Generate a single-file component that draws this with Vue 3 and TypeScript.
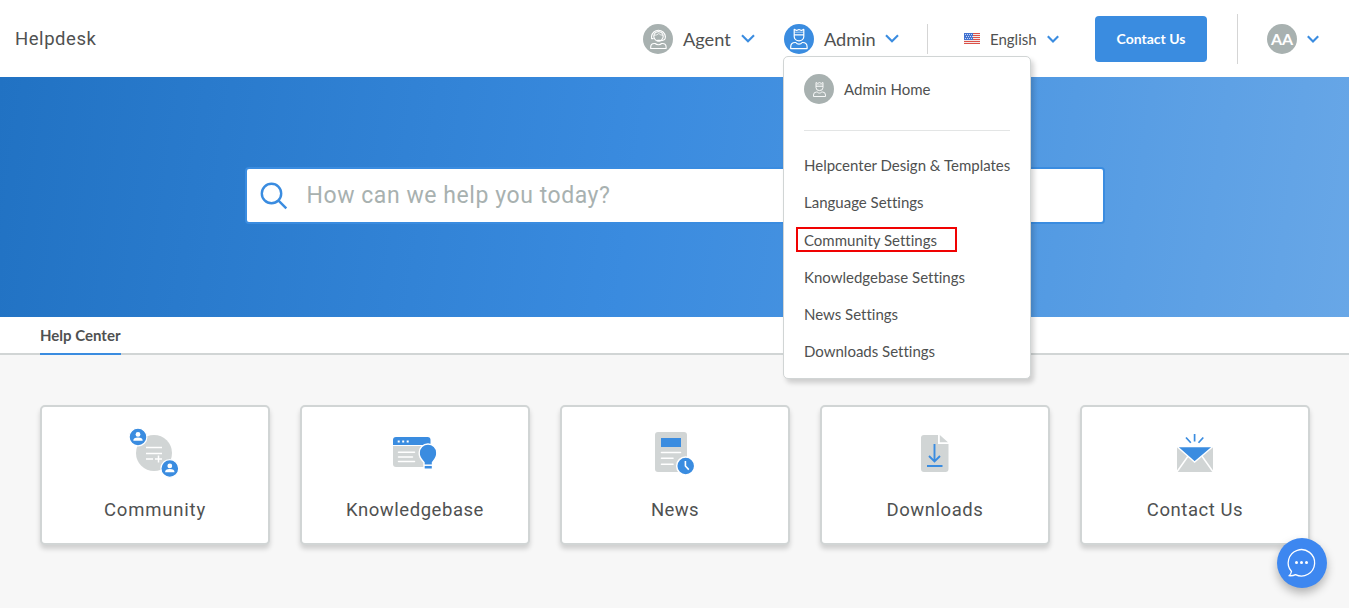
<script setup lang="ts">
interface Card {
  id: string
  label: string
}

const settings: string[] = [
  'Helpcenter Design & Templates',
  'Language Settings',
  'Community Settings',
  'Knowledgebase Settings',
  'News Settings',
  'Downloads Settings',
]
const highlighted = 'Community Settings'

const cards: Card[] = [
  { id: 'community', label: 'Community' },
  { id: 'kb', label: 'Knowledgebase' },
  { id: 'news', label: 'News' },
  { id: 'downloads', label: 'Downloads' },
  { id: 'mail', label: 'Contact Us' },
]
</script>

<template>
  <div class="page">
    <header class="topbar">
      <div class="brand">Helpdesk</div>
      <nav class="nav">
        <div class="role agent">
          <svg class="avatar" viewBox="0 0 30 30">
            <circle cx="15" cy="15" r="15" fill="#a8b1b0" />
            <g fill="none" stroke="#fff" stroke-width="1.1" stroke-linecap="round" stroke-linejoin="round">
              <path d="M8.600 12.300a6.900 6.900 0 0 1 13.700 0" />
              <path d="M8.600 12.200v2.400h1.600M22.300 12.200v1.600q0 2.900-5.400 2.900" />
              <circle cx="15.500" cy="12.300" r="4.700" />
              <path d="M11.200 11.300q3.200 0 4.600-1.800q1.400 1.700 4 1.800" stroke-width=".8" />
              <path d="M14.700 16.600h2" stroke-width="1.800" />
              <path d="M7.700 24.500V23q0-3.500 3.600-3.500h.8q1.300 1.200 3.300 1.200t3.300-1.200h.8q3.600 0 3.600 3.500v1.500Z" />
            </g>
          </svg>
          <span class="role-name">Agent</span>
          <svg class="chevron" viewBox="0 0 14 9"><path d="M1 1.300 7 7.300l6-6" /></svg>
        </div>

        <div class="role admin">
          <svg class="avatar" viewBox="0 0 30 30">
            <circle cx="15" cy="15" r="15" fill="#3a8ce0" />
            <g fill="none" stroke="#fff" stroke-width="1.200" stroke-linejoin="round">
              <path d="M10.200 11V5.400l2.400 1.100L15 5.500l2.400 1 2.400-1.100V11M10.200 10.800h9.600v1.800a4.800 4.300 0 0 1-9.600 0Z" />
              <path d="M10.200 8.200h9.600" stroke-width=".6" />
              <path d="M6.700 24.600V23q0-4.500 4.500-4.500h.6q1.200 1.600 3.200 1.600t3.200-1.600h.4q4.500 0 4.500 4.500v1.600Z" />
            </g>
          </svg>
          <span class="role-name">Admin</span>
          <svg class="chevron" viewBox="0 0 14 9"><path d="M1 1.300 7 7.300l6-6" /></svg>

          <div class="menu">
            <div class="menu-home">
              <svg class="avatar" viewBox="0 0 30 30">
                <circle cx="15" cy="15" r="15" fill="#a8b1b0" />
                <g fill="none" stroke="#fff" stroke-width=".9" stroke-linejoin="round">
                  <path d="M12 12.500V8.500l1.700.9 1.800-.8 1.800.8 1.700-.9v4M12 12.300h7v1.300a3.500 3 0 0 1-7 0Z" />
                  <path d="M12 10.800h7" stroke-width=".5" />
                  <path d="M9.500 22.500V21q0-3 3-3h.7q1 1.100 2.300 1.100t2.300-1.100h.7q3 0 3 3v1.500Z" />
                </g>
              </svg>
              <span>Admin Home</span>
            </div>
            <ul class="menu-list">
              <li v-for="item in settings" :key="item" :class="{ marked: item === highlighted }">
                <span>{{ item }}</span>
              </li>
            </ul>
          </div>
        </div>

        <span class="divider short"></span>

        <div class="language">
          <svg class="flag" viewBox="0 0 16 11" shape-rendering="crispEdges">
            <rect width="16" height="11" fill="#f3e9e9" />
            <path d="M0 .5h16M0 2.500h16M0 4.500h16M0 6.500h16M0 8.500h16M0 10.500h16" stroke="#dc5148" />
            <rect width="9" height="7" fill="#4373d0" />
            <path d="M1 1.500h8M2 3.500h7M1 5.500h8" stroke="#c5d7f7" stroke-dasharray="1 1" />
          </svg>
          <span class="language-name">English</span>
          <svg class="chevron small" viewBox="0 0 12 8"><path d="M.8 1.200 6 6.400l5.200-5.200" /></svg>
        </div>

        <button class="contact-button" type="button">Contact Us</button>
        <span class="divider tall"></span>

        <div class="user">
          <span class="initials">AA</span>
          <svg class="chevron small" viewBox="0 0 12 8"><path d="M.8 1.200 6 6.400l5.200-5.200" /></svg>
        </div>
      </nav>
    </header>

    <section class="hero">
      <div class="search">
        <svg class="search-icon" viewBox="0 0 28 28">
          <circle cx="11.500" cy="11.500" r="9.700" />
          <path d="m18.300 18.300 8 8" />
        </svg>
        <span>How can we help you today?</span>
      </div>
    </section>

    <div class="tabs"><span class="tab">Help Center</span></div>

    <main class="cards">
      <div v-for="card in cards" :key="card.id" class="card">
        <svg v-if="card.id === 'community'" class="card-icon" viewBox="0 0 70 65">
          <circle cx="34" cy="33" r="18" fill="#d1d5d5" />
          <path d="M26 27.500h16M26 33.400h16M26 39h7M38.500 35.500v7M35 39h7" stroke="#fff" stroke-width="1.500" />
          <g v-for="p in [[18, 17], [49.800, 48.500]]" :key="p[0]" :transform="`translate(${p[0]} ${p[1]})`">
            <circle r="8.900" fill="#3a8ce0" stroke="#fff" stroke-width="1.200" />
            <circle cy="-2.600" r="2.400" fill="#fff" />
            <path d="M-4.700 3.700q0-3.300 4.700-3.300t4.700 3.300Z" fill="#fff" />
          </g>
        </svg>
        <svg v-else-if="card.id === 'kb'" class="card-icon" viewBox="0 0 70 65">
          <path d="M13 26h37.500v18a3 3 0 0 1-3 3H16a3 3 0 0 1-3-3Z" fill="#d1d5d5" />
          <path d="M16 17h31.500a3 3 0 0 1 3 3v5H13v-5a3 3 0 0 1 3-3Z" fill="#3a8ce0" />
          <path d="M18.500 32.200h16M18.500 37h14M18.500 41.600h16" stroke="#fff" stroke-width="1.500" stroke-linecap="round" />
          <path d="M17.700 21.500h2M22.200 21.500h2M26.700 21.500h2" stroke="#fff" stroke-width="1.800" />
          <path d="M44 49.200v-6.700q-5.200-5.300-4.800-9.700a8.800 8.800 0 0 1 17.600 0q.4 4.400-4.300 9.700v6.700Z" fill="#3a8ce0" stroke="#fff" stroke-width="1.400" />
          <path d="M44 45.200h8.500" stroke="#fff" stroke-width="1.500" />
        </svg>
        <svg v-else-if="card.id === 'news'" class="card-icon" viewBox="0 0 70 65">
          <rect x="15" y="12" width="32" height="40" rx="3" fill="#d1d5d5" />
          <path d="M21 18h20v9H21Z" fill="#3a8ce0" />
          <path d="M21.500 32.500h19M21.500 38.300h11.500M21.500 44.300h11.500" stroke="#fff" stroke-width="1.600" stroke-linecap="round" />
          <circle cx="45.700" cy="46" r="9" fill="#3a8ce0" stroke="#fff" stroke-width="1.500" />
          <path d="M45.400 41v5l3.400 3.600" fill="none" stroke="#fff" stroke-width="1.600" />
        </svg>
        <svg v-else-if="card.id === 'downloads'" class="card-icon" viewBox="0 0 70 65">
          <path d="M24 15h14v9h10.500v25a3 3 0 0 1-3 3H24a3 3 0 0 1-3-3V18a3 3 0 0 1 3-3Z" fill="#d1d5d5" />
          <path d="M39.800 15v7.200H48Z" fill="#d1d5d5" />
          <path d="M34.500 24v17.500M29 36l5.500 5.500L40 36M27 46h15.500" fill="none" stroke="#3a8ce0" stroke-width="1.900" />
        </svg>
        <svg v-else class="card-icon" viewBox="0 0 70 65">
          <rect x="17" y="27" width="36" height="25" fill="#d1d5d5" />
          <path d="m17 51.800 11.500-16.300M53 51.800 41.500 35.500" stroke="#fff" stroke-width="1.500" />
          <path d="M17 26.500h36L34.600 42Z" fill="#3a8ce0" stroke="#fff" stroke-width="1.400" />
          <path d="M34.600 14v7.500M26 17.500l4.800 5.300M43.300 17.500l-4.800 5.300" stroke="#3a8ce0" stroke-width="1.700" />
        </svg>
        <span class="card-label" :class="card.id">{{ card.label }}</span>
      </div>
    </main>

    <div class="chat">
      <svg viewBox="0 0 50 50">
        <path d="M14.500 33.500A13.200 13.200 0 1 1 18.500 36.600Q16 38 12 37.700q2-1.500 2.500-4.200Z" fill="none" stroke="#fff" stroke-width="1.300" stroke-linejoin="round" />
        <g fill="#fff"><circle cx="19.500" cy="24.500" r="1.500" /><circle cx="24.500" cy="24.500" r="1.500" /><circle cx="29.500" cy="24.500" r="1.500" /></g>
      </svg>
    </div>
  </div>
</template>

<style>
body {
  margin: 0;
  background: #f7f7f7;
}
</style>

<style scoped>
* {
  box-sizing: border-box;
}
.page {
  position: relative;
  width: 1349px;
  height: 608px;
  overflow: hidden;
  background: #f7f7f7;
  color: #4f5151;
  font-family: Lato, 'Liberation Sans', sans-serif;
  font-variant-ligatures: none;
}
svg {
  display: block;
  flex: none;
}
.topbar {
  display: flex;
  align-items: center;
  justify-content: space-between;
  height: 77px;
  padding: 0 30px 0 15px;
  background: #fff;
}
.brand {
  font: 400 18.5px/24px Roboto, sans-serif;
  letter-spacing: 0.55px;
}
.nav,
.role,
.language,
.user {
  display: flex;
  align-items: center;
}
.role {
  position: relative;
}
.agent {
  width: 112px;
  margin-right: 29px;
}
.admin {
  width: 115px;
  margin-right: 28px;
}
.avatar {
  width: 30px;
  height: 30px;
}
.role-name {
  flex: 1;
  padding: 1px 0 0 10px;
  font-size: 18.2px;
  line-height: 24px;
  white-space: nowrap;
}
.chevron {
  width: 14px;
  height: 9px;
  fill: none;
  stroke: #3a8ce0;
  stroke-width: 2.1;
}
.chevron.small {
  width: 12px;
  height: 8px;
}
.divider {
  width: 1px;
  background: #d5d5d5;
}
.short {
  height: 30px;
}
.tall {
  height: 50px;
}
.language {
  width: 95px;
  margin: 0 36px;
}
.flag {
  width: 16px;
  height: 11px;
}
.language-name {
  flex: 1;
  padding-left: 10px;
  font-size: 15px;
  line-height: 20px;
}
.contact-button {
  width: 112px;
  height: 46px;
  margin-right: 30px;
  padding: 0;
  border: 0;
  border-radius: 4px;
  background: #3a8ce0;
  color: #fff;
  font: 700 14px/20px Lato, sans-serif;
}
.user {
  gap: 10px;
  margin-left: 29px;
}
.initials {
  width: 30px;
  height: 30px;
  border-radius: 50%;
  background: #a8b1b0;
  color: #fff;
  font-size: 16px;
  font-weight: 700;
  line-height: 30px;
  text-align: center;
}
.menu {
  position: absolute;
  z-index: 5;
  top: 32px;
  left: -1px;
  width: 248px;
  height: 323px;
  padding: 17px 20px;
  border: 1px solid #d1d5d5;
  border-radius: 5px;
  background: #fff;
  box-shadow: 3px 4px 5px rgba(0, 0, 0, 0.17);
  font-size: 15px;
  white-space: nowrap;
}
.menu-home {
  display: flex;
  gap: 10px;
  align-items: center;
  height: 57px;
  padding-bottom: 26px;
  border-bottom: 1px solid #e3e5e5;
}
.menu-list {
  margin: 16px 0 0;
  padding: 0;
  list-style: none;
}
.menu-list li {
  display: flex;
  align-items: center;
  height: 37.2px;
}
.marked span {
  width: 161px;
  height: 25px;
  margin-left: -8px;
  padding-left: 6px;
  border: 2px solid #f00202;
  line-height: 23px;
}
.hero {
  display: flex;
  justify-content: center;
  height: 240px;
  padding-top: 90px;
  background: linear-gradient(98deg, #2172c3 0%, #3a8bdf 47%, #4491e0 60%, #549be3 78%, #68a7e7 100%);
}
.search {
  display: flex;
  align-items: center;
  width: 860px;
  height: 57px;
  padding-left: 13px;
  gap: 19px;
  border: 2px solid #3a8ce0;
  border-radius: 4px;
  background: #fff;
  color: #a8b1b0;
  font: 400 23px/28px Roboto, sans-serif;
  letter-spacing: 0.56px;
}
.search-icon {
  width: 28px;
  height: 28px;
  fill: none;
  stroke: #3a8ce0;
  stroke-width: 2.4;
}
.tabs {
  height: 38px;
  padding-left: 40px;
  border-bottom: 2px solid #d1d5d5;
  background: #fff;
}
.tab {
  display: inline-block;
  width: 81px;
  height: 38px;
  border-bottom: 2px solid #3a8ce0;
  font-size: 15px;
  font-weight: 700;
  line-height: 37px;
  white-space: nowrap;
}
.cards {
  display: grid;
  grid-template-columns: repeat(5, 230px);
  gap: 30px;
  padding: 50px 40px 0;
}
.card {
  display: flex;
  flex-direction: column;
  align-items: center;
  height: 140px;
  padding-top: 13px;
  border: 2px solid #d1d5d5;
  border-radius: 5px;
  background: #fff;
  box-shadow: 0 4px 5px rgba(0, 0, 0, 0.16);
}
.card-icon {
  width: 70px;
  height: 65px;
}
.card-label {
  margin-top: 13px;
  font: 400 18.5px/24px Roboto, sans-serif;
  letter-spacing: 0.55px;
}
.card-label.community {
  letter-spacing: 0.8px;
}
.card-label.news {
  letter-spacing: 0.4px;
}
.chat {
  position: absolute;
  right: 22px;
  bottom: 20px;
  width: 50px;
  height: 50px;
  border-radius: 50%;
  background: #3d87f0;
  box-shadow: 0 5px 10px rgba(0, 0, 0, 0.28);
}
</style>
